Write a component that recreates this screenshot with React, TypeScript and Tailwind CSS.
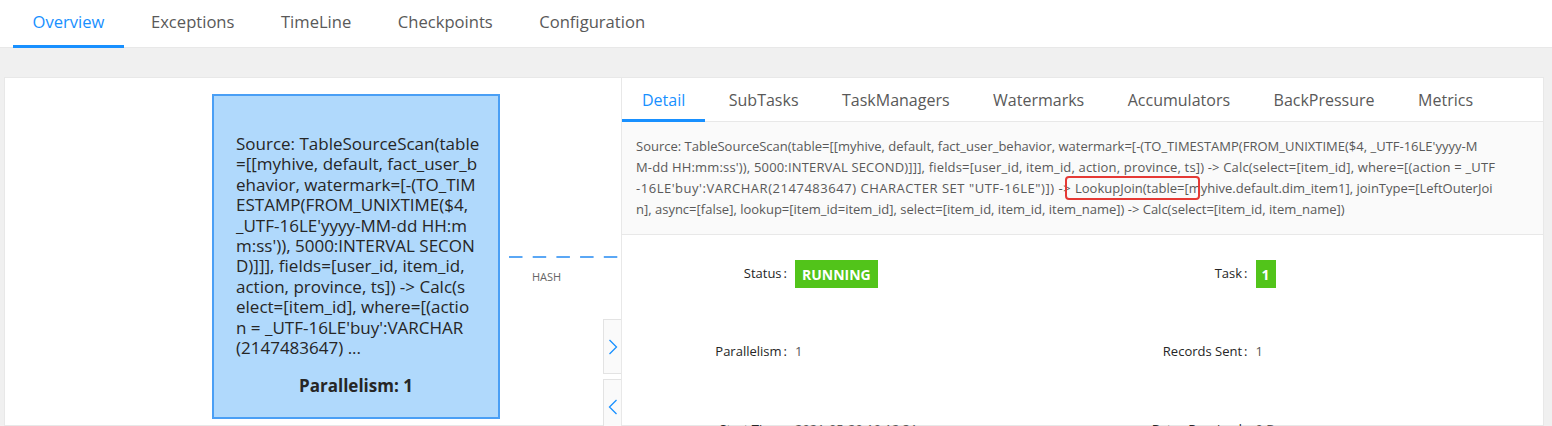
import React from "react";

const topTabs = ["Overview", "Exceptions", "TimeLine", "Checkpoints", "Configuration"];
const subTabs = ["Detail", "SubTasks", "TaskManagers", "Watermarks", "Accumulators", "BackPressure", "Metrics"];

const nodeLines = [
  "Source: TableSourceScan(table",
  "=[[myhive, default, fact_user_b",
  "ehavior, watermark=[-(TO_TIM",
  "ESTAMP(FROM_UNIXTIME($4,",
  "_UTF-16LE'yyyy-MM-dd HH:m",
  "m:ss')), 5000:INTERVAL SECON",
  "D)]]], fields=[user_id, item_id,",
  "action, province, ts]) -> Calc(s",
  "elect=[item_id], where=[(actio",
  "n = _UTF-16LE'buy':VARCHAR",
  "(2147483647) ...",
];

function Chevron({ dir }: { dir: "left" | "right" }) {
  return (
    <svg width="10" height="16" viewBox="0 0 10 16" fill="none">
      <polyline
        points={dir === "right" ? "1.5,1 8.5,8 1.5,15" : "8.5,1 1.5,8 8.5,15"}
        stroke="#1890ff"
        strokeWidth="1.3"
        fill="none"
      />
    </svg>
  );
}

function Label({ children }: { children: React.ReactNode }) {
  return (
    <div className="w-[173px] shrink-0 flex justify-end text-[13px] text-[#262626]">
      <span>{children}</span>
      <span className="ml-[2px] mr-[8px]">:</span>
    </div>
  );
}

export default function App() {
  return (
    <div className="w-[1552px] h-[426px] overflow-hidden bg-[#f0f0f0] font-['Open_Sans',sans-serif] flex flex-col">
      {/* top tabs */}
      <div className="h-[48px] bg-white border-b border-[#e8e8e8] flex pl-[13px] gap-[7.5px] shrink-0">
        {topTabs.map((t, i) => (
          <div key={t} className="relative px-[19.5px] h-[47px]">
            <div
              className={
                "h-[45px] flex items-center text-[16.6px] " +
                (i === 0 ? "text-[#1890ff]" : "text-[#595959]")
              }
            >
              {t}
            </div>
            {i === 0 && <div className="absolute left-0 right-0 bottom-[-1px] h-[3px] bg-[#1890ff]" />}
          </div>
        ))}
      </div>

      {/* card */}
      <div className="mt-[29px] ml-[4px] mr-[8px] flex-1 bg-white border border-[#e8e8e8] flex min-h-0">
        {/* graph canvas */}
        <div className="relative w-[616px] shrink-0">
          <div className="absolute left-[207px] top-[16px] w-[288px] h-[325px] bg-[#b0d9fc] border-2 border-[#4a9ff5] pt-[38px] pl-[22px] text-[17px] leading-[20.4px] text-[#262626]">
            {nodeLines.map((l, i) => (
              <div key={i} className="whitespace-pre">
                {l}
              </div>
            ))}
            <div className="mt-[18px] -ml-[22px] text-center font-bold">Parallelism: 1</div>
          </div>

          <svg className="absolute left-[504px] top-[178px]" width="112" height="2" viewBox="0 0 112 2">
            <line x1="0" y1="1" x2="112" y2="1" stroke="#5aa7f5" strokeWidth="2" strokeDasharray="13.5 10.2" />
          </svg>
          <div className="absolute left-[527px] top-[191px] text-[11px] leading-[16px] text-[#666666]">HASH</div>

          <div className="absolute left-[598px] top-[241px] w-[18px] h-[55px] bg-[#fafafa] border border-r-0 border-[#e3e3e3] flex items-center justify-center">
            <Chevron dir="right" />
          </div>
          <div className="absolute left-[598px] top-[301px] w-[18px] h-[55px] bg-[#fafafa] border border-r-0 border-[#e3e3e3] flex items-center justify-center">
            <Chevron dir="left" />
          </div>
        </div>

        {/* detail drawer */}
        <div className="flex-1 border-l border-[#e8e8e8] flex flex-col min-w-0">
          <div className="h-[44px] border-b border-[#e8e8e8] flex gap-[3.5px] shrink-0">
            {subTabs.map((t, i) => (
              <div key={t} className="relative px-[20px] h-[43px]">
                <div
                  className={
                    "pt-[12px] leading-[21px] text-[16px] " + (i === 0 ? "text-[#1890ff]" : "text-[#595959]")
                  }
                >
                  {t}
                </div>
                {i === 0 && <div className="absolute left-0 right-0 bottom-[-1px] h-[3px] bg-[#1890ff]" />}
              </div>
            ))}
          </div>

          <div className="bg-[#fafafa] border-b border-[#e8e8e8] px-[14px] py-[14px] text-[13px] leading-[21px] text-[#595959] shrink-0">
            <div className="whitespace-pre">
              Source: TableSourceScan(table=[[myhive, default, fact_user_behavior, watermark=[-(TO_TIMESTAMP(FROM_UNIXTIME($4, _UTF-16LE'yyyy-M
            </div>
            <div className="whitespace-pre tracking-[0.17px]">
              M-dd HH:mm:ss')), 5000:INTERVAL SECOND)]]], fields=[user_id, item_id, action, province, ts]) -&gt; Calc(select=[item_id], where=[(action = _UTF
            </div>
            <div className="whitespace-pre">
              <span className="tracking-[0.53px]">-16LE'buy':VARCHAR(2147483647) CHARACTER SET "UTF-16LE")]) -&gt; </span>
              <span className="relative">
                LookupJoin(table=[
                <span className="absolute left-[-10px] top-[-3px] w-[135px] h-[24px] border-2 border-[#e53935] rounded-[4px]" />
              </span>
              myhive.default.dim_item1], joinType=[LeftOuterJoi
            </div>
            <div className="whitespace-pre">
              n], async=[false], lookup=[item_id=item_id], select=[item_id, item_id, item_name]) -&gt; Calc(select=[item_id, item_name])
            </div>
          </div>

          <div className="grid grid-cols-2">
            <div className="h-[78px] flex items-center">
              <Label>Status</Label>
              <span className="h-[28px] px-[7px] flex items-center bg-[#52c41a] text-white font-bold text-[14px]">RUNNING</span>
            </div>
            <div className="h-[78px] flex items-center">
              <Label>Task</Label>
              <span className="h-[28px] px-[6px] flex items-center bg-[#52c41a] text-white font-bold text-[14px]">1</span>
            </div>
            <div className="h-[78px] flex items-center">
              <Label>Parallelism</Label>
              <span className="text-[13px] text-[#595959]">1</span>
            </div>
            <div className="h-[78px] flex items-center">
              <Label>Records Sent</Label>
              <span className="text-[13px] text-[#595959]">1</span>
            </div>
            <div className="h-[78px] flex items-center">
              <Label>Start Time</Label>
              <span className="text-[13px] text-[#595959]">2021-05-20 10:12:31</span>
            </div>
            <div className="h-[78px] flex items-center">
              <Label>Bytes Received</Label>
              <span className="text-[13px] text-[#595959]">0 B</span>
            </div>
          </div>
        </div>
      </div>
    </div>
  );
}
